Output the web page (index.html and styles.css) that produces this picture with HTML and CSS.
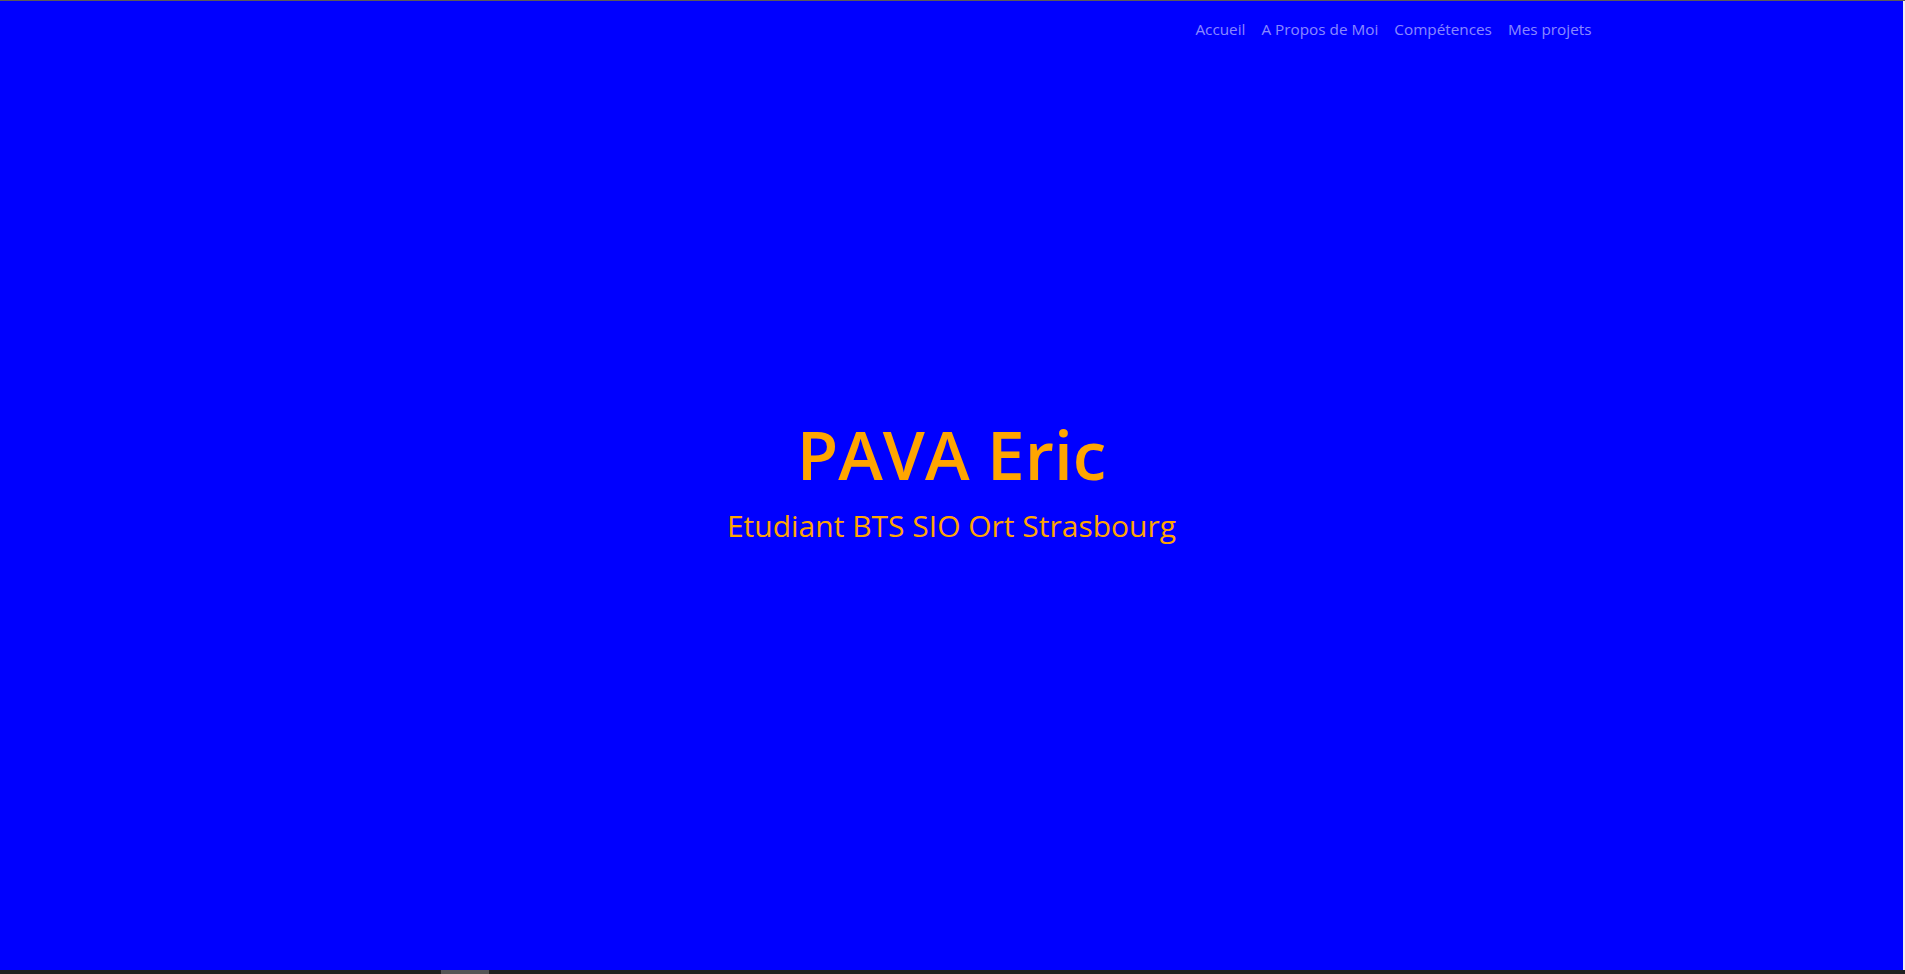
FILE: index.html
```html
<!DOCTYPE html>
<html lang="fr">
<head>
<meta charset="utf-8">
<title>PAVA Eric</title>
<link rel="stylesheet" href="styles.css">
</head>
<body>
<div class="frame">
  <div class="page">
    <header class="navbar">
      <div class="container">
        <nav class="nav">
          <a class="nav-link" href="#">Accueil</a>
          <a class="nav-link" href="#">A Propos de Moi</a>
          <a class="nav-link" href="#">Compétences</a>
          <a class="nav-link" href="#">Mes projets</a>
        </nav>
      </div>
    </header>
    <main class="hero">
      <h1 class="hero-title">PAVA Eric</h1>
      <p class="hero-sub">Etudiant BTS SIO Ort Strasbourg</p>
    </main>
  </div>
  <div class="edge"></div>
</div>
<div class="hscroll"><div class="hthumb"></div></div>
</body>
</html>
```
FILE: styles.css
```css
* { box-sizing: border-box; }
html, body { margin: 0; padding: 0; height: 100%; overflow: hidden; }
body {
  font-family: "Open Sans", "Noto Sans", "DejaVu Sans", sans-serif;
  background: #1f1f1f;
  border-top: 1px solid #5a5a5a;
  display: flex;
  flex-direction: column;
}
.frame {
  flex: 1;
  display: flex;
  min-height: 0;
}
.page {
  flex: 1;
  background: #0000ff;
  position: relative;
  display: flex;
  flex-direction: column;
}
.edge { width: 2px; background: #f0f0f0; }
.hscroll {
  height: 4px;
  background: #202020;
  display: flex;
  padding-left: 441px;
}
.hthumb { width: 48px; background: #555; }

.navbar {
  position: absolute;
  top: 0; left: 0; right: 0;
  padding-top: 16px;
}
.container {
  max-width: 1320px;
  margin: 0 auto;
  padding: 0 12px;
  display: flex;
  justify-content: flex-end;
}
.nav { display: flex; }
.nav-link {
  color: rgba(255,255,255,0.55);
  text-decoration: none;
  font-size: 15.3px;
  line-height: 24px;
  padding: 0 8px;
}
.hero {
  flex: 1;
  display: flex;
  flex-direction: column;
  align-items: center;
  justify-content: center;
  color: #ffa500;
  text-align: center;
  padding-bottom: 12px;
}
.hero-title {
  margin: 0 0 11px;
  font-size: 67.5px;
  font-weight: 600;
  line-height: 81px;
}
.hero-sub {
  margin: 0;
  font-size: 30px;
  line-height: 40px;
}
```
